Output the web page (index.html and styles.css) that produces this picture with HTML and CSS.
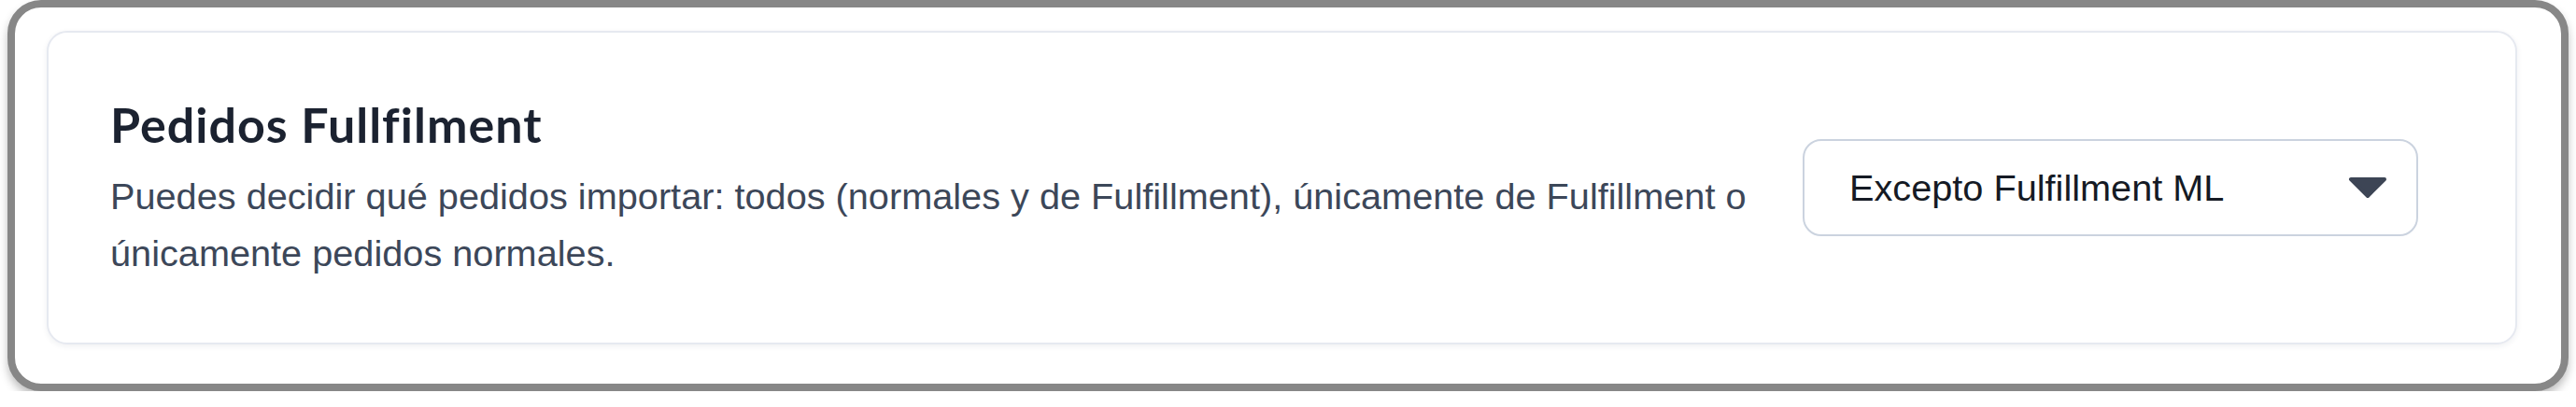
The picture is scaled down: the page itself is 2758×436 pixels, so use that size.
FILE: index.html
```html
<!DOCTYPE html>
<html lang="es">
<head>
    <meta charset="UTF-8">
    <meta name="viewport" content="width=device-width, initial-scale=1.0">
    <title>Pedidos Fullfilment</title>
    <link rel="stylesheet" href="styles.css">
</head>
<body>
    <div class="frame">
        <div class="card">
            <div class="info">
                <div class="title">Pedidos Fullfilment</div>
                <p class="desc">Puedes decidir qué pedidos importar: todos (normales y de Fulfillment), únicamente de Fulfillment o únicamente pedidos normales.</p>
            </div>

            <div class="select">
                <span class="select-value">Excepto Fulfillment ML</span>
                <svg class="select-arrow" width="42" height="24" viewBox="0 0 42 24">
                    <path d="M3 3 L39 3 L21 21 Z" fill="#3d4555" stroke="#3d4555" stroke-width="4" stroke-linejoin="round"/>
                </svg>
            </div>
        </div>
    </div>
</body>
</html>
```

FILE: styles.css
```css
body {
    margin: 0;
    padding: 0 8px;
    background-color: #fff;
}

.frame {
    box-sizing: border-box;
    height: 419px;
    padding: 25px 47px 42px 34px;
    background-color: #fff;
    border: 8px solid #878787;
    border-radius: 36px;
    box-shadow: 0 6px 10px rgba(0, 0, 0, 0.25);
}

.card {
    box-sizing: border-box;
    height: 100%;
    display: flex;
    align-items: center;
    padding: 0 104px 0 66px;
    background-color: #fff;
    border: 2px solid #e6e9f0;
    border-radius: 22px;
    box-shadow: 0 2px 6px rgba(30, 40, 70, 0.07);
}

.info {
    flex: 1;
    margin-right: 20px;
    padding-top: 3px;
}

.title {
    font-family: Lato, "Liberation Sans", sans-serif;
    font-weight: 700;
    font-size: 52px;
    letter-spacing: 1px;
    line-height: 60px;
    color: #1b2230;
}

.desc {
    margin: 17px 0 0;
    font-family: "Liberation Sans", Arial, sans-serif;
    font-size: 39.7px;
    line-height: 61px;
    color: #3c4759;
}

.select {
    box-sizing: border-box;
    width: 659px;
    height: 104px;
    display: flex;
    align-items: center;
    justify-content: space-between;
    padding: 0 31px 0 48px;
    border: 2px solid #cbd3df;
    border-radius: 20px;
    background-color: #fff;
}

.select-value {
    font-family: "Liberation Sans", Arial, sans-serif;
    font-size: 39.7px;
    color: #151a24;
}

.select-arrow {
    display: block;
}
```
